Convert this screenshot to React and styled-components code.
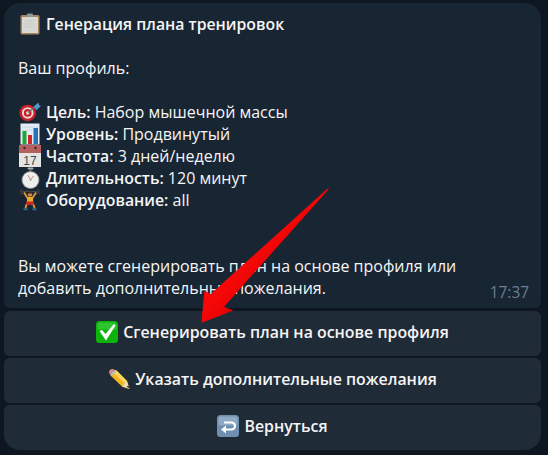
import React from "react";
import styled, { createGlobalStyle } from "styled-components";

const Global = createGlobalStyle`
  html, body {
    margin: 0;
    padding: 0;
    background: #0e1621;
    overflow: hidden;
  }
  * { box-sizing: border-box; }
`;

const Page = styled.div`
  position: relative;
  width: 548px;
  height: 455px;
  padding: 3px 7px 0 4px;
  display: flex;
  flex-direction: column;
  gap: 2px;
  font-family: "Open Sans", "Noto Sans", sans-serif;
  font-size: 16px;
  color: #f5f5f5;
`;

const Bubble = styled.div`
  position: relative;
  height: 305px;
  margin-bottom: 1px;
  padding: 10px 14px 0;
  background: #182533;
  border-radius: 16px 16px 6px 6px;
`;

//one line of the message
const Line = styled.div`
  display: flex;
  align-items: center;
  height: 22px;
  line-height: 22px;
  white-space: pre;
  margin-top: ${({ $gap }) => $gap || 0}px;
`;

const Emoji = styled.span`
  display: flex;
  width: 22px;
  height: 22px;
  margin: 0 5px 0 1px;
  flex: none;
`;

const Label = styled.b`
  font-weight: 600;
  font-size: 15.8px;
`;

const Time = styled.span`
  position: absolute;
  right: 12px;
  bottom: 5px;
  line-height: 20px;
  font-size: 15.4px;
  color: #6d7f8f;
`;

const KeyButton = styled.div`
  height: 45px;
  padding-bottom: 3px;
  display: flex;
  align-items: center;
  justify-content: center;
  gap: 5px;
  background: #202b38;
  font-size: 15.9px;
  font-weight: 600;
  border-radius: ${({ $last }) => ($last ? "6px 6px 16px 16px" : "6px")};
`;

const Arrow = styled.svg`
  position: absolute;
  left: 190px;
  top: 180px;
  pointer-events: none;
`;

const Clipboard = () => (
  <svg width="22" height="22" viewBox="0 0 22 22">
    <rect x="1.500" y="2" width="19" height="19.500" rx="1.500" fill="#a5835c" />
    <rect x="3" y="4" width="16" height="16" fill="#d8d8d2" />
    <path d="M6 8h10M6 11h10M6 14h10" stroke="#bfbfba" strokeWidth="1" strokeDasharray="1 1" />
    <rect x="8" y="0.500" width="6" height="3.500" rx="1" fill="#8f969c" />
  </svg>
);

const Dart = () => (
  <svg width="24" height="22" viewBox="0 0 24 22">
    <circle cx="9.500" cy="12" r="9" fill="#c9212c" />
    <circle cx="9.500" cy="12" r="6.300" fill="#ecdcd8" />
    <circle cx="9.500" cy="12" r="4.200" fill="#c9212c" />
    <circle cx="9.500" cy="12" r="1.800" fill="#ecdcd8" />
    <path d="M10 11.500 18 5" stroke="#60707c" strokeWidth="1.500" />
    <path d="M16 5 21 0.500l1 3 2 1L19 9z" fill="#4f97c4" />
  </svg>
);

const Chart = () => (
  <svg width="22" height="22" viewBox="0 0 22 22">
    <rect x="1.500" y="0.500" width="19" height="21" fill="#e3edf6" />
    <path d="M3 4h16M3 7h16" stroke="#c6d4e2" strokeWidth="1" />
    <rect x="3.500" y="8" width="4" height="13" fill="#19a83a" />
    <rect x="9" y="12" width="4" height="9" fill="#d2232a" />
    <rect x="14.500" y="5" width="4.500" height="16" fill="#2e6fb8" />
  </svg>
);

const Calendar = () => (
  <svg width="22" height="22" viewBox="0 0 22 22">
    <rect y="0" width="22" height="22" fill="#e4e4e2" />
    <rect y="0" width="22" height="8" fill="#b5605f" />
    <circle cx="5.500" cy="3" r="1.200" fill="#3a2a2a" />
    <circle cx="16.500" cy="3" r="1.200" fill="#3a2a2a" />
    <text x="11" y="20" textAnchor="middle" fontFamily="Liberation Sans" fontSize="12" fill="#3d4a55">17</text>
  </svg>
);

const Stopwatch = () => (
  <svg width="22" height="22" viewBox="0 0 22 22">
    <rect x="8.500" y="0.500" width="6" height="2" rx="1" fill="#a9adb1" />
    <rect x="10.500" y="2" width="2" height="2.500" fill="#6f7377" />
    <circle cx="11.500" cy="13" r="9" fill="#85898d" />
    <circle cx="11.500" cy="13" r="8" fill="#eeeeea" />
    <path d="M11.500 13 9 8M11.500 13l3-4" stroke="#c98a86" strokeWidth="1" />
    <circle cx="11.500" cy="13" r="0.800" fill="#8a8e92" />
  </svg>
);

const Lifter = () => (
  <svg width="22" height="22" viewBox="0 0 22 22">
    <path d="M1 2.500H21" stroke="#4a4a4a" strokeWidth="1.200" />
    <rect x="1" y="0" width="3" height="5.500" rx="1" fill="#333537" />
    <rect x="18" y="0" width="3" height="5.500" rx="1" fill="#333537" />
    <path d="M5 3.500 8.500 9M17 3.500 13.500 9" stroke="#d7933a" strokeWidth="2" />
    <circle cx="11" cy="5.500" r="2.200" fill="#c98a45" />
    <path d="M8.800 4.500a2.200 2 0 0 1 4.400 0z" fill="#3a2a20" />
    <rect x="8" y="8" width="6" height="5" fill="#e8ab2c" />
    <rect x="7" y="12.500" width="8" height="3.500" fill="#c22a2a" />
    <path d="M7.500 15.500 6.500 19M14.500 15.500l1 3.500" stroke="#d7933a" strokeWidth="2" fill="none" />
    <path d="M4.500 20.300h4M13.500 20.300h4" stroke="#2f6f86" strokeWidth="2" />
  </svg>
);

const Check = () => (
  <svg width="22" height="22" viewBox="0 0 22 22">
    <rect width="22" height="22" rx="3.500" fill="#0bb30b" />
    <path d="M1.500 3.500a2 2 0 0 1 2-2h15a2 2 0 0 1 2 2v5H1.500z" fill="#4fd04f" opacity=".55" />
    <path d="M3.500 10 6 9 9.500 13 18 3 19.500 4.500 10 19.500z" fill="#fff" />
  </svg>
);

const Pencil = () => (
  <svg width="22" height="22" viewBox="0 0 22 22">
    <path d="M2.500 7.500 8 2 19 13 21.500 21 14 18.500z" fill="#f2b61f" />
    <path d="M8 2 19 13 16.500 15.500 5.500 4.500z" fill="#fcd860" />
    <path d="M19 13 21.500 21 14 18.500z" fill="#ecdcb8" />
    <path d="M18.500 18.500 21.500 21 20.500 17.500z" fill="#3d3a36" />
    <path d="M1 4.500a3.500 3.500 0 0 1 3.500-3.500 3.500 3.500 0 0 1 2 .7L2 6.500A3.500 3.500 0 0 1 1 4.500z" fill="#d98b8b" />
    <path d="M2 6.500 6.500 1.800 8.500 3.500 3.500 8z" fill="#b9bcc0" />
  </svg>
);

const Back = () => (
  <svg width="22" height="22" viewBox="0 0 22 22">
    <rect width="22" height="22" rx="3.500" fill="#6f8fb0" />
    <rect x="1.500" y="1.500" width="19" height="9" rx="2" fill="#a5bcd2" opacity=".6" />
    <path d="M8 14.500h6.500a3.500 3.500 0 0 0 0-7H7" fill="none" stroke="#fff" strokeWidth="2.200" />
    <path d="M9 10.500 4 14.500 9 18.500z" fill="#fff" />
  </svg>
);

export default function App() {
  return (
    <Page>
      <Global />
      <Bubble>
        <Line>
          <Emoji><Clipboard /></Emoji>
          <Label>Генерация плана тренировок</Label>
        </Line>
        <Line $gap={22}>Ваш профиль:</Line>
        <Line $gap={22}>
          <Emoji><Dart /></Emoji>
          <Label>Цель: </Label>Набор мышечной массы
        </Line>
        <Line>
          <Emoji><Chart /></Emoji>
          <Label>Уровень: </Label>Продвинутый
        </Line>
        <Line>
          <Emoji><Calendar /></Emoji>
          <Label>Частота: </Label>3 дней/неделю
        </Line>
        <Line>
          <Emoji><Stopwatch /></Emoji>
          <Label>Длительность: </Label>120 минут
        </Line>
        <Line>
          <Emoji><Lifter /></Emoji>
          <Label>Оборудование: </Label>all
        </Line>
        <Line $gap={44}>Вы можете сгенерировать план на основе профиля или</Line>
        <Line>добавить дополнительные пожелания.</Line>
        <Time>17:37</Time>
      </Bubble>
      <KeyButton><Check />Сгенерировать план на основе профиля</KeyButton>
      <KeyButton><Pencil />Указать дополнительные пожелания</KeyButton>
      <KeyButton $last><Back />Вернуться</KeyButton>
      <Arrow width="150" height="150" viewBox="0 0 150 150">
        <defs>
          <linearGradient id="arrowFill" x1="0.350" y1="0.350" x2="0.650" y2="0.650">
            <stop offset="0" stopColor="#ff0b0b" />
            <stop offset="0.6" stopColor="#ee0505" />
            <stop offset="1" stopColor="#b90000" />
          </linearGradient>
        </defs>
        <path
          d="M138 9 33 127 42 130.500 12 142 15 111.500 20.500 115z"
          fill="url(#arrowFill)"
          stroke="url(#arrowFill)"
          strokeWidth="1.200"
          strokeLinejoin="round"
        />
      </Arrow>
    </Page>
  );
}
